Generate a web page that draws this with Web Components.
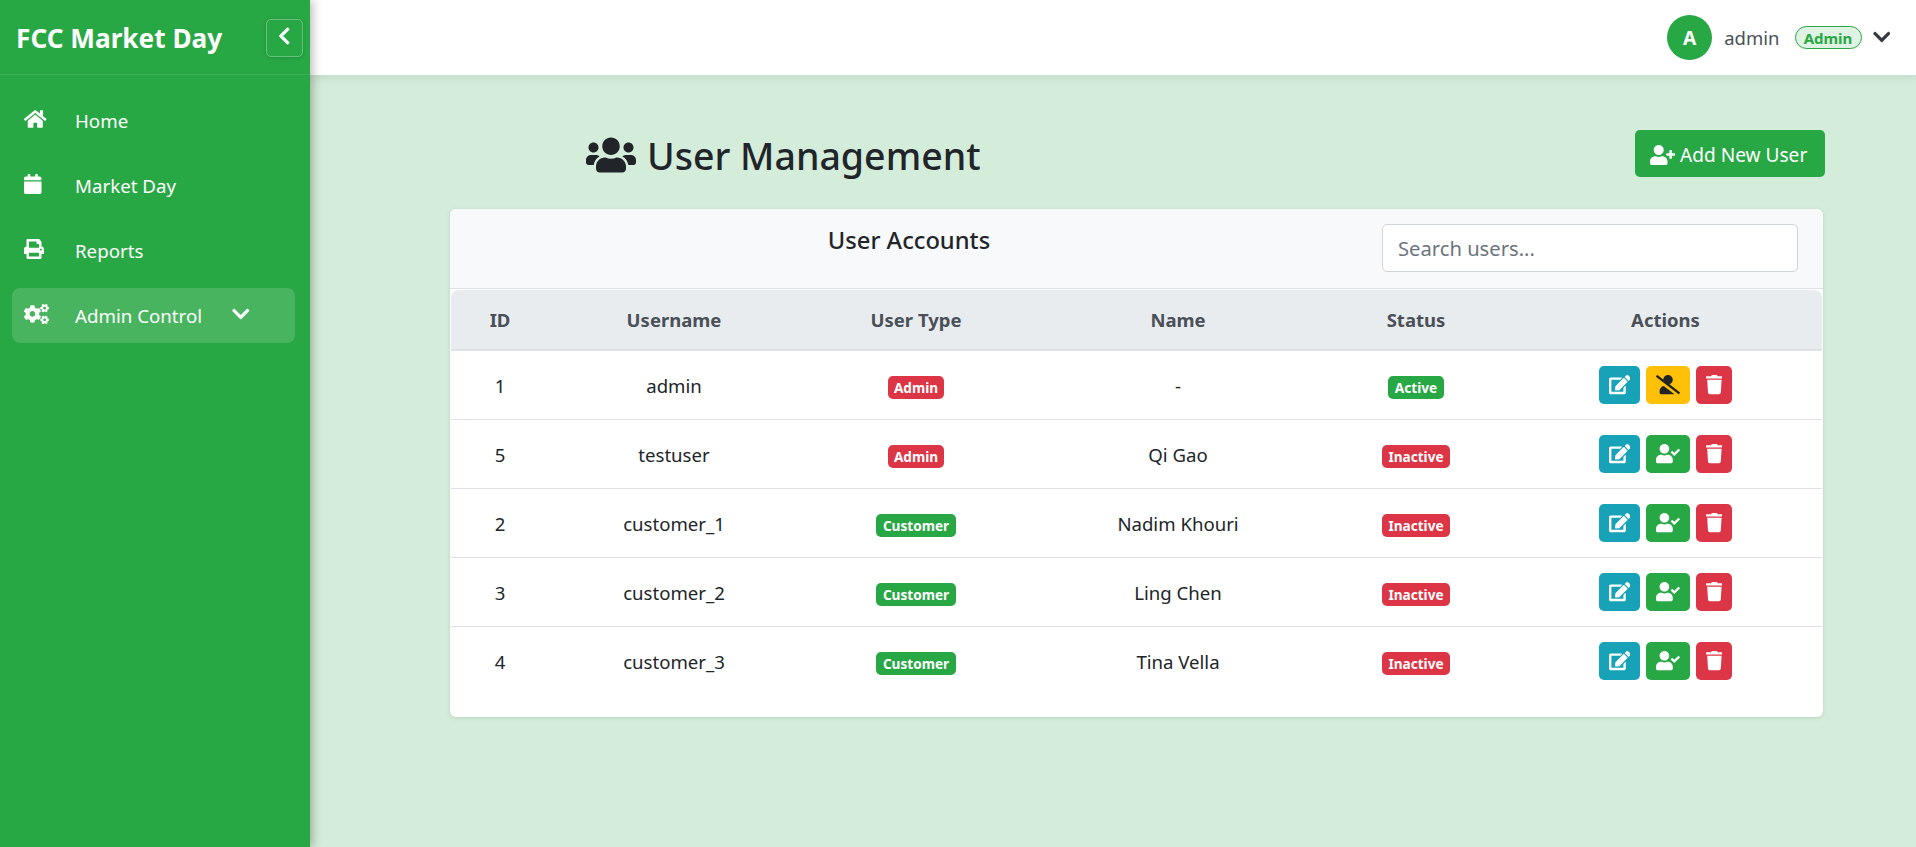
<!DOCTYPE html>
<html lang="en"><head><meta charset="utf-8"><title>User Management</title>
<style>
html,body{margin:0;padding:0;height:100%;overflow:hidden}
body{font-family:"Noto Sans","Open Sans",sans-serif;background:#d4edda;color:#212529}
</style></head><body>
<x-app></x-app>
<script>
const ICONS={
home:[576,"M280.37 148.26L96 300.11V464a16 16 0 0 0 16 16l112.06-.29a16 16 0 0 0 15.92-16V368a16 16 0 0 1 16-16h64a16 16 0 0 1 16 16v95.64a16 16 0 0 0 16 16.05L464 480a16 16 0 0 0 16-16V300L295.67 148.26a12.19 12.19 0 0 0-15.3 0zM571.6 251.47L488 182.56V44.05a12 12 0 0 0-12-12h-56a12 12 0 0 0-12 12v72.61L318.47 43a48 48 0 0 0-61 0L4.34 251.47a12 12 0 0 0-1.6 16.9l25.5 31A12 12 0 0 0 45.15 301l235.22-193.74a12.19 12.19 0 0 1 15.3 0L530.9 301a12 12 0 0 0 16.9-1.6l25.5-31a12 12 0 0 0-1.7-16.93z"],
calendar:[448,"M12 192h424c6.6 0 12 5.4 12 12v260c0 26.5-21.5 48-48 48H48c-26.5 0-48-21.5-48-48V204c0-6.6 5.4-12 12-12zm436-44v-36c0-26.5-21.5-48-48-48h-48V12c0-6.6-5.4-12-12-12h-40c-6.6 0-12 5.4-12 12v52H160V12c0-6.6-5.4-12-12-12h-40c-6.6 0-12 5.4-12 12v52H48C21.5 64 0 85.5 0 112v36c0 6.6 5.4 12 12 12h424c6.6 0 12-5.4 12-12z"],
print:[512,"M448 192V77.25c0-8.49-3.37-16.62-9.37-22.63L393.37 9.37c-6-6-14.14-9.37-22.63-9.37H96C78.33 0 64 14.33 64 32v160c-35.35 0-64 28.65-64 64v112c0 8.84 7.16 16 16 16h48v96c0 17.67 14.33 32 32 32h320c17.67 0 32-14.33 32-32v-96h48c8.84 0 16-7.16 16-16V256c0-35.35-28.65-64-64-64zm-64 256H128v-96h256v96zm0-224H128V64h192v48c0 8.84 7.16 16 16 16h48v96zm48 72c-13.25 0-24-10.75-24-24 0-13.26 10.75-24 24-24s24 10.74 24 24c0 13.25-10.75 24-24 24z"],
cogs:[640,"M512.1 191l-8.2 14.3c-3 5.3-9.4 7.5-15.1 5.4-11.8-4.4-22.6-10.7-32.1-18.6-4.6-3.8-5.8-10.5-2.8-15.7l8.2-14.3c-6.9-8-12.3-17.3-15.9-27.4h-16.5c-6 0-11.2-4.3-12.2-10.3-2-12-2.1-24.6 0-37.1 1-6 6.2-10.4 12.2-10.4h16.5c3.6-10.1 9-19.4 15.9-27.4l-8.2-14.3c-3-5.2-1.9-11.9 2.8-15.7 9.5-7.9 20.4-14.2 32.1-18.6 5.7-2.1 12.1.1 15.1 5.4l8.2 14.3c10.5-1.9 21.2-1.9 31.7 0L552 6.3c3-5.3 9.4-7.5 15.1-5.4 11.8 4.4 22.6 10.7 32.1 18.6 4.6 3.8 5.8 10.5 2.8 15.7l-8.2 14.3c6.9 8 12.3 17.3 15.9 27.4h16.5c6 0 11.2 4.3 12.2 10.3 2 12 2.1 24.6 0 37.1-1 6-6.2 10.4-12.2 10.4h-16.5c-3.6 10.1-9 19.4-15.9 27.4l8.2 14.3c3 5.2 1.9 11.9-2.8 15.7-9.5 7.9-20.4 14.2-32.1 18.6-5.7 2.1-12.1-.1-15.1-5.4l-8.2-14.3c-10.4 1.9-21.2 1.9-31.7 0zm-10.5-58.8c38.5 29.6 82.4-14.3 52.8-52.8-38.5-29.7-82.4 14.3-52.8 52.8zM386.3 286.1l33.7 16.8c10.1 5.8 14.5 18.1 10.5 29.1-8.9 24.2-26.4 46.4-42.6 65.8-7.4 8.9-20.2 11.1-30.3 5.3l-29.1-16.8c-16 13.7-34.6 24.6-54.9 31.7v33.6c0 11.6-8.3 21.6-19.7 23.6-24.6 4.2-50.4 4.4-75.9 0-11.5-2-20-11.9-20-23.6V418c-20.3-7.2-38.9-18-54.9-31.7L74 403c-10 5.8-22.9 3.6-30.3-5.3-16.2-19.4-33.3-41.6-42.2-65.7-4-10.9.4-23.2 10.5-29.1l33.3-16.8c-3.9-20.9-3.9-42.4 0-63.4L12 205.8c-10.1-5.8-14.6-18.1-10.5-29 8.9-24.2 26-46.4 42.2-65.8 7.4-8.9 20.2-11.1 30.3-5.3l29.1 16.8c16-13.7 34.6-24.6 54.9-31.7V57.1c0-11.5 8.2-21.5 19.6-23.5 24.6-4.2 50.5-4.4 76-.1 11.5 2 20 11.9 20 23.6v33.6c20.3 7.2 38.9 18 54.9 31.7l29.1-16.8c10-5.8 22.9-3.6 30.3 5.3 16.2 19.4 33.2 41.6 42.1 65.8 4 10.9.1 23.2-10 29.1l-33.7 16.8c3.9 21 3.9 42.5 0 63.5zm-117.6 21.1c59.2-77-28.7-164.9-105.7-105.7-59.2 77 28.7 164.9 105.7 105.7zm243.4 182.7l-8.2 14.3c-3 5.3-9.4 7.5-15.1 5.4-11.8-4.4-22.6-10.7-32.1-18.6-4.6-3.8-5.8-10.5-2.8-15.7l8.2-14.3c-6.9-8-12.3-17.3-15.9-27.4h-16.5c-6 0-11.2-4.3-12.2-10.3-2-12-2.1-24.6 0-37.1 1-6 6.2-10.4 12.2-10.4h16.5c3.6-10.1 9-19.4 15.9-27.4l-8.2-14.3c-3-5.2-1.9-11.9 2.8-15.7 9.5-7.9 20.4-14.2 32.1-18.6 5.7-2.1 12.1.1 15.1 5.4l8.2 14.3c10.5-1.9 21.2-1.9 31.7 0l8.2-14.3c3-5.3 9.4-7.5 15.1-5.4 11.8 4.4 22.6 10.7 32.1 18.6 4.6 3.8 5.8 10.5 2.8 15.7l-8.2 14.3c6.9 8 12.3 17.3 15.9 27.4h16.5c6 0 11.2 4.3 12.2 10.3 2 12 2.1 24.6 0 37.1-1 6-6.2 10.4-12.2 10.4h-16.5c-3.6 10.1-9 19.4-15.9 27.4l8.2 14.3c3 5.2 1.9 11.9-2.8 15.7-9.5 7.9-20.4 14.2-32.1 18.6-5.7 2.1-12.1-.1-15.1-5.4l-8.2-14.3c-10.4 1.9-21.2 1.9-31.7 0zM501.6 431c38.5 29.6 82.4-14.3 52.8-52.8-38.5-29.6-82.4 14.3-52.8 52.8z"],
users:[640,"M96 224c35.3 0 64-28.7 64-64s-28.7-64-64-64-64 28.7-64 64 28.7 64 64 64zm448 0c35.3 0 64-28.7 64-64s-28.7-64-64-64-64 28.7-64 64 28.7 64 64 64zm32 32h-64c-17.6 0-33.5 7.1-45.1 18.6 40.3 22.1 68.9 62 75.1 109.4h66c17.7 0 32-14.3 32-32v-32c0-35.3-28.7-64-64-64zm-256 0c61.9 0 112-50.1 112-112S381.9 32 320 32 208 82.1 208 144s50.1 112 112 112zm76.8 32h-8.3c-20.8 10-43.9 16-68.5 16s-47.6-6-68.5-16h-8.3C179.6 288 128 339.6 128 403.2V432c0 26.5 21.5 48 48 48h288c26.5 0 48-21.5 48-48v-28.8c0-63.6-51.6-115.2-115.2-115.2zm-223.7-13.4C161.5 263.1 145.6 256 128 256H64c-35.3 0-64 28.7-64 64v32c0 17.7 14.3 32 32 32h65.9c6.3-47.4 34.9-87.3 75.2-109.4z"],
userplus:[640,"M624 208h-64v-64c0-8.8-7.2-16-16-16h-32c-8.8 0-16 7.2-16 16v64h-64c-8.8 0-16 7.2-16 16v32c0 8.8 7.2 16 16 16h64v64c0 8.8 7.2 16 16 16h32c8.8 0 16-7.2 16-16v-64h64c8.8 0 16-7.2 16-16v-32c0-8.8-7.2-16-16-16zm-400 48c70.7 0 128-57.3 128-128S294.7 0 224 0 96 57.3 96 128s57.3 128 128 128zm89.6 32h-16.7c-22.2 10.2-46.9 16-72.9 16s-50.6-5.8-72.9-16h-16.7C60.2 288 0 348.2 0 422.4V464c0 26.5 21.5 48 48 48h352c26.5 0 48-21.5 48-48v-41.6c0-74.2-60.2-134.4-134.4-134.4z"],
usercheck:[640,"M224 256c70.7 0 128-57.3 128-128S294.7 0 224 0 96 57.3 96 128s57.3 128 128 128zm89.6 32h-16.7c-22.2 10.2-46.9 16-72.9 16s-50.6-5.8-72.9-16h-16.7C60.2 288 0 348.2 0 422.4V464c0 26.5 21.5 48 48 48h352c26.5 0 48-21.5 48-48v-41.6c0-74.2-60.2-134.4-134.4-134.4zm323-128.4l-27.8-28.1c-4.6-4.7-12.1-4.7-16.8-.1l-104.8 104-45.5-45.8c-4.6-4.7-12.1-4.7-16.8-.1l-28.1 27.9c-4.7 4.6-4.7 12.1-.1 16.8l81.7 82.3c4.6 4.7 12.1 4.7 16.8.1l141.3-140.2c4.6-4.7 4.7-12.2.1-16.8z"],
userslash:[640,"M633.8 458.1L362.3 248.3C412.1 230.7 448 183.8 448 128 448 57.3 390.7 0 320 0c-67.1 0-121.5 51.8-126.9 117.4L45.5 3.4C38.5-2 28.5-.8 23 6.2L3.4 31.4c-5.4 7-4.2 17 2.8 22.4l588.4 454.7c7 5.4 17 4.2 22.5-2.8l19.6-25.3c5.4-6.8 4.1-16.9-2.9-22.3zM96 422.4V464c0 26.5 21.5 48 48 48h350.2L207.4 290.3C144.2 301.3 96 356 96 422.4z"],
edit:[576,"M402.6 83.2l90.2 90.2c3.8 3.8 3.8 10 0 13.8L274.4 405.6l-92.8 10.3c-12.4 1.4-22.9-9.1-21.5-21.5l10.3-92.8L388.8 83.2c3.8-3.8 10-3.8 13.8 0zm162-22.9l-48.8-48.8c-15.2-15.2-39.9-15.2-55.2 0l-35.4 35.4c-3.8 3.8-3.8 10 0 13.8l90.2 90.2c3.8 3.8 10 3.8 13.8 0l35.4-35.4c15.2-15.3 15.2-40 0-55.2zM384 346.2V448H64V128h229.8c3.2 0 6.2-1.3 8.5-3.5l40-40c7.6-7.6 2.2-20.5-8.5-20.5H48C21.5 64 0 85.5 0 112v352c0 26.5 21.5 48 48 48h352c26.5 0 48-21.5 48-48V306.2c0-10.7-12.9-16-20.5-8.5l-40 40c-2.2 2.3-3.5 5.3-3.5 8.5z"],
trash:[448,"M432 32H312l-9.4-18.7A24 24 0 0 0 281.1 0H166.8a23.72 23.72 0 0 0-21.4 13.3L136 32H16A16 16 0 0 0 0 48v32a16 16 0 0 0 16 16h416a16 16 0 0 0 16-16V48a16 16 0 0 0-16-16zM53.2 467a48 48 0 0 0 47.9 45h245.8a48 48 0 0 0 47.9-45L416 128H32z"],
chevleft:[320,"M34.52 239.03L228.87 44.69c9.37-9.37 24.57-9.37 33.94 0l22.67 22.67c9.36 9.36 9.37 24.52.04 33.9L131.49 256l154.02 154.75c9.34 9.38 9.32 24.54-.04 33.9l-22.67 22.67c-9.37 9.37-24.57 9.37-33.94 0L34.52 272.97c-9.37-9.37-9.37-24.57 0-33.94z"],
chevdown:[448,"M207.029 381.476L12.686 187.132c-9.373-9.373-9.373-24.569 0-33.941l22.667-22.667c9.357-9.357 24.522-9.375 33.901-.04L224 284.505l154.745-154.021c9.379-9.335 24.544-9.317 33.901.04l22.667 22.667c9.373 9.373 9.373 24.569 0 33.941L240.971 381.476c-9.373 9.372-24.569 9.372-33.942 0z"]
};
class XIcon extends HTMLElement{
  connectedCallback(){
    const [w,d]=ICONS[this.getAttribute('name')];
    const s=+this.getAttribute('size')||16;
    this.attachShadow({mode:'open'}).innerHTML=`<style>:host{display:inline-flex;flex:none;line-height:0}svg{display:block;fill:currentColor}</style><svg width="${w/512*s}" height="${s}" viewBox="0 0 ${w} 512"><path d="${d}"/></svg>`;
  }
}
customElements.define('x-icon',XIcon);

class XNavItem extends HTMLElement{
  connectedCallback(){
    const r=this.attachShadow({mode:'open'});
    const chev=this.hasAttribute('expandable')?'<x-icon name="chevdown" size="20" class="c"></x-icon>':'';
    r.innerHTML=`<style>
      :host{display:flex;align-items:center;height:55px;border-radius:8px;padding-left:12px;color:#fff;font-size:18.7px;box-sizing:border-box}
      :host([active]){background:rgba(255,255,255,.15)}
      .i{width:51px;display:flex;margin-top:-4px}
      .l{white-space:nowrap;width:157px}
      .c{margin-top:-4px}
    </style><span class="i"><x-icon name="${this.getAttribute('icon')}" size="20"></x-icon></span><span class="l"><slot></slot></span>${chev}`;
  }
}
customElements.define('x-nav-item',XNavItem);

class XSidebar extends HTMLElement{
  constructor(){super();this.attachShadow({mode:'open'}).innerHTML=`<style>
    :host{display:block;width:310px;flex:none;background:#28a745;color:#fff;box-shadow:2px 0 10px rgba(0,0,0,.3);position:relative;z-index:2}
    .head{height:74px;border-bottom:1px solid rgba(255,255,255,.1);display:flex;align-items:center;justify-content:space-between;padding:0 7px 0 16px}
    .brand{font-size:26.2px;font-weight:700;white-space:nowrap;margin-top:1px}
    button{width:37px;height:38px;padding:0;border:1px solid rgba(255,255,255,.3);border-radius:5px;background:transparent;color:#fff;display:flex;align-items:center;justify-content:center;box-shadow:0 1px 4px rgba(0,0,0,.15);margin-top:1px}
    button x-icon{margin-top:-3px}
    nav{display:flex;flex-direction:column;gap:10px;padding:18px 15px 0 12px}
    </style><div class="head"><span class="brand">FCC Market Day</span><button aria-label="Collapse"><x-icon name="chevleft" size="20"></x-icon></button></div>
    <nav><slot></slot></nav>`;}
}
customElements.define('x-sidebar',XSidebar);

class XTopbar extends HTMLElement{
  constructor(){super();this.attachShadow({mode:'open'}).innerHTML=`<style>
    :host{display:flex;align-items:center;justify-content:flex-end;height:75px;flex:none;background:#fff;box-shadow:0 2px 10px rgba(0,0,0,.1);padding-right:26px;box-sizing:border-box;position:relative;z-index:1}
    .av{width:45px;height:45px;border-radius:50%;background:#28a745;color:#fff;font-weight:700;font-size:19.2px;display:flex;align-items:center;justify-content:center;margin-right:12px}
    .n{font-size:18.5px;color:#495057;margin-right:15px}
    .b{font-size:15px;font-weight:700;color:#28a745;background:rgba(40,167,69,.15);border:1px solid #28a745;border-radius:12px;height:23px;width:67px;box-sizing:border-box;display:flex;align-items:center;justify-content:center;margin-right:11px}
    x-icon{color:#343a40;margin-top:-1px}
    </style><span class="av">A</span><span class="n">admin</span><span class="b">Admin</span><x-icon name="chevdown" size="20"></x-icon>`;}
}
customElements.define('x-topbar',XTopbar);

class XBadge extends HTMLElement{
  connectedCallback(){
    this.attachShadow({mode:'open'}).innerHTML=`<style>
    :host{display:inline-block;vertical-align:middle;margin-top:2px;background:${this.getAttribute('color')};color:#fff;font-size:13.6px;font-weight:700;line-height:23px;height:23px;padding:0 6.4px;border-radius:5px;white-space:nowrap}
    </style><slot></slot>`;
  }
}
customElements.define('x-badge',XBadge);

class XActBtn extends HTMLElement{
  connectedCallback(){
    this.attachShadow({mode:'open'}).innerHTML=`<style>
    :host{display:inline-flex;align-items:center;justify-content:center;height:38px;padding:0 10px;border-radius:5px;background:${this.getAttribute('bg')};color:${this.getAttribute('fg')||'#fff'}}
    </style><x-icon name="${this.getAttribute('icon')}" size="19.2"></x-icon>`;
  }
}
customElements.define('x-act-btn',XActBtn);

const USERS=[
 ['1','admin','Admin','-',true],
 ['5','testuser','Admin','Qi Gao',false],
 ['2','customer_1','Customer','Nadim Khouri',false],
 ['3','customer_2','Customer','Ling Chen',false],
 ['4','customer_3','Customer','Tina Vella',false]
];
class XUserTable extends HTMLElement{
  constructor(){super();
    const rows=USERS.map(u=>`<tr><td>${u[0]}</td><td>${u[1]}</td>
      <td><x-badge color="${u[2]==='Admin'?'#dc3545':'#28a745'}">${u[2]}</x-badge></td>
      <td>${u[3]}</td>
      <td><x-badge color="${u[4]?'#28a745':'#dc3545'}">${u[4]?'Active':'Inactive'}</x-badge></td>
      <td><div class="acts"><x-act-btn bg="#17a2b8" icon="edit"></x-act-btn>${u[4]?'<x-act-btn bg="#ffc107" fg="#212529" icon="userslash"></x-act-btn>':'<x-act-btn bg="#28a745" icon="usercheck"></x-act-btn>'}<x-act-btn bg="#dc3545" icon="trash"></x-act-btn></div></td></tr>`).join('');
    this.attachShadow({mode:'open'}).innerHTML=`<style>
    :host{display:block;padding:1px 1px 22px 1px}
    table{width:100%;border-collapse:separate;border-spacing:0;table-layout:fixed;font-size:18.6px;color:#212529}
    th{height:59px;background:#e9ecef;color:#495057;font-weight:700;font-size:18.5px;border-bottom:2px solid #dee2e6;padding:0}
    th:first-child{border-top-left-radius:8px}th:last-child{border-top-right-radius:8px}
    td{height:68px;text-align:center;vertical-align:middle;padding:0;border-bottom:1px solid #dee2e6}
    tr:last-child td{border-bottom:0}
    .acts{display:flex;justify-content:center;gap:5.8px}
    </style><table><colgroup><col style="width:98px"><col style="width:250px"><col style="width:234px"><col style="width:290px"><col style="width:186px"><col style="width:313px"></colgroup>
    <thead><tr><th>ID</th><th>Username</th><th>User Type</th><th>Name</th><th>Status</th><th>Actions</th></tr></thead><tbody>${rows}</tbody></table>`;
  }
}
customElements.define('x-user-table',XUserTable);

class XCard extends HTMLElement{
  constructor(){super();this.attachShadow({mode:'open'}).innerHTML=`<style>
    :host{display:block;background:#fff;border-radius:6px;box-shadow:0 1px 4px rgba(0,0,0,.12);overflow:hidden;margin-right:1px}
    .h{height:79px;background:#f8f9fa;border-bottom:1px solid #dee2e6;display:flex;align-items:flex-start;padding:0 25px 0 16px;gap:30px}
    h5{margin:13px 0 0;flex:1;text-align:center;font-size:23.7px;line-height:36px;font-weight:500;color:#212529}
    input{width:416px;height:48px;box-sizing:border-box;margin-top:15px;border:1px solid #ced4da;border-radius:5px;padding:0 15px;font:20.2px "Noto Sans",sans-serif;background:#fff;outline:0}
    input::placeholder{color:#6c757d;opacity:1}
    </style><div class="h"><h5>User Accounts</h5><input placeholder="Search users..."></div><slot></slot>`;}
}
customElements.define('x-card',XCard);

class XPageHead extends HTMLElement{
  constructor(){super();this.attachShadow({mode:'open'}).innerHTML=`<style>
    :host{display:flex;align-items:center;justify-content:space-between;height:47px;margin-bottom:32px;padding-left:136px}
    h1{margin:3px 0 0;display:flex;align-items:center;gap:11px;font-size:37.5px;font-weight:500;color:#212529;white-space:nowrap}
    .add{display:flex;align-items:center;gap:5px;height:47px;width:190px;box-sizing:border-box;padding:2px 0 0 15px;background:#28a745;color:#fff;border-radius:5px;font-size:19.1px;margin-right:-1px;white-space:nowrap}
    </style><h1><x-icon name="users" size="40"></x-icon>User Management</h1><span class="add"><x-icon name="userplus" size="20"></x-icon>Add New User</span>`;}
}
customElements.define('x-page-head',XPageHead);

class XApp extends HTMLElement{
  constructor(){super();this.attachShadow({mode:'open'}).innerHTML=`<style>
    :host{display:flex;height:847px;overflow:hidden}
    .main{flex:1;display:flex;flex-direction:column;min-width:0}
    .content{padding:55px 92px 0 140px}
    </style>
    <x-sidebar>
      <x-nav-item icon="home">Home</x-nav-item>
      <x-nav-item icon="calendar">Market Day</x-nav-item>
      <x-nav-item icon="print">Reports</x-nav-item>
      <x-nav-item icon="cogs" active expandable>Admin Control</x-nav-item>
    </x-sidebar>
    <div class="main"><x-topbar></x-topbar><div class="content"><x-page-head></x-page-head><x-card><x-user-table></x-user-table></x-card></div></div>`;}
}
customElements.define('x-app',XApp);
</script>
</body></html>
